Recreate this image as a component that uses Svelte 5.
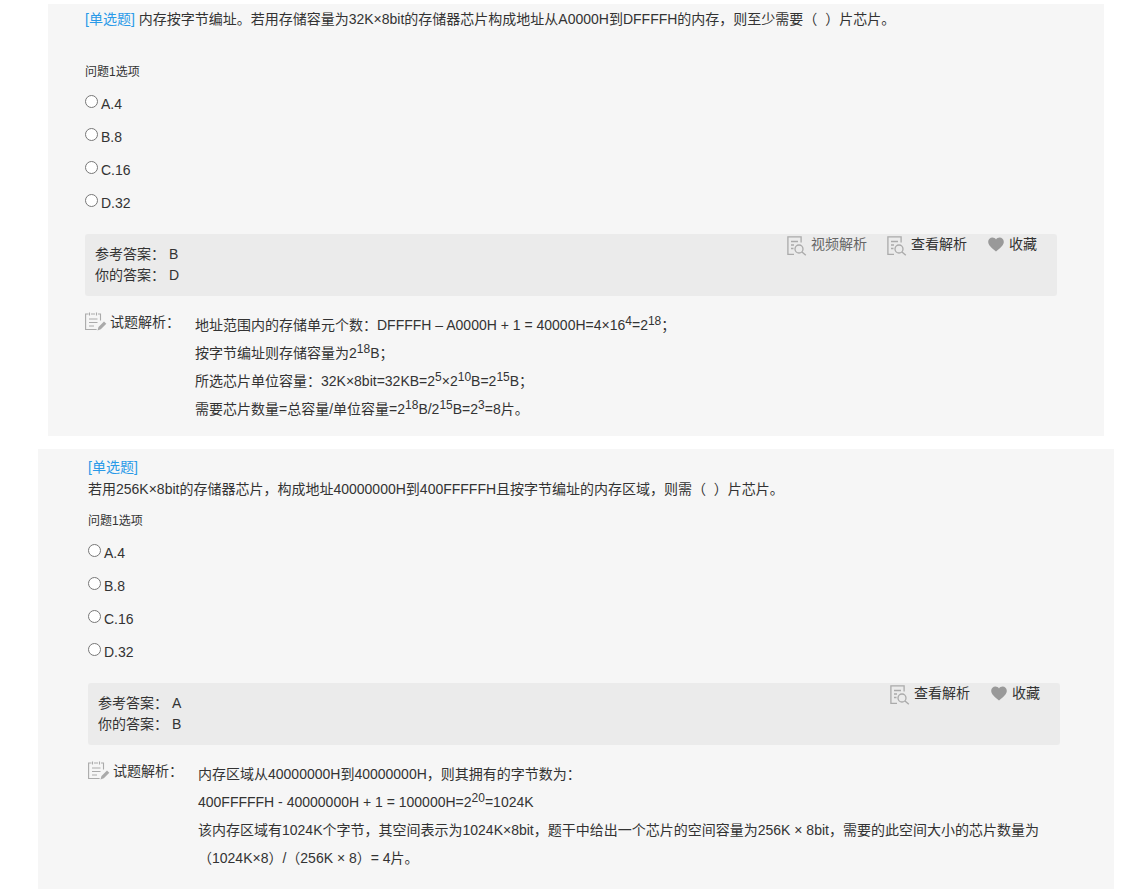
<script>
  const opts = ['A.4', 'B.8', 'C.16', 'D.32'];
</script>

{#snippet doc()}
  <svg class="ico doc" width="20" height="20" viewBox="0 0 20 20" fill="none" stroke="#aaa" stroke-width="1.300">
    <path d="M7 18.300H.9V.9h13.200v5.600" />
    <path d="M4 5.500h7M4 9h3M4 12.500h2.500" />
    <circle cx="12" cy="13" r="4" />
    <path d="M15 16l3.800 3.300" />
  </svg>
{/snippet}

{#snippet heart()}
  <svg class="ico" width="16" height="15" viewBox="0 0 16 15">
    <path fill="#999" d="M8 14.600C3 10.600.2 8 .2 4.800.2 2.300 2.200.6 4.400.6 5.900.6 7.200 1.300 8 2.500 8.800 1.300 10.100.6 11.600.6c2.200 0 4.200 1.700 4.200 4.200 0 3.200-2.800 5.800-7.800 9.800z" />
  </svg>
{/snippet}

{#snippet note()}
  <svg class="note" width="22" height="19" viewBox="0 0 22 19" fill="none" stroke="#aaa" stroke-width="1.100">
    <path d="M3.500 2H.6v15.500h11M15.500 8.500V2h-2.500M6 2h4" />
    <path d="M4.500.5v3M11.500.5v3" />
    <path d="M4 7h8.500M4 10.500h8.500M4 14h5" />
    <path fill="#aaa" stroke="none" d="M12.500 18.500l1-3.500 5.500-5.500 2.300 2.300-5.500 5.500z" />
  </svg>
{/snippet}

{#snippet options()}
  <p class="ask">问题1选项</p>
  <div class="opts">
    {#each opts as o}
      <label class="opt"><input type="radio" /><span>{o}</span></label>
    {/each}
  </div>
{/snippet}

<main class="page">
  <section class="card first">
    <p class="q"><span class="tag">[单选题]</span> 内存按字节编址。若用存储容量为32K×8bit的存储器芯片构成地址从A0000H到DFFFFH的内存，则至少需要（&nbsp; ）片芯片。</p>
    {@render options()}
    <div class="answer">
      <div class="tools">
        <span class="tool muted">{@render doc()}视频解析</span>
        <span class="tool">{@render doc()}查看解析</span>
        <span class="tool like">{@render heart()}收藏</span>
      </div>
      <div>参考答案： B</div>
      <div>你的答案： D</div>
    </div>
    <div class="exp">
      <div class="exp-h">{@render note()}<span>试题解析：</span></div>
      <div class="exp-b">
        <p>地址范围内的存储单元个数：DFFFFH – A0000H + 1 = 40000H=4×16<sup>4</sup>=2<sup>18</sup>；</p>
        <p>按字节编址则存储容量为2<sup>18</sup>B；</p>
        <p>所选芯片单位容量：32K×8bit=32KB=2<sup>5</sup>×2<sup>10</sup>B=2<sup>15</sup>B；</p>
        <p>需要芯片数量=总容量/单位容量=2<sup>18</sup>B/2<sup>15</sup>B=2<sup>3</sup>=8片。</p>
      </div>
    </div>
  </section>

  <section class="card second">
    <p class="q"><span class="tag">[单选题]</span><br />若用256K×8bit的存储器芯片，构成地址40000000H到400FFFFFH且按字节编址的内存区域，则需（&nbsp; ）片芯片。</p>
    {@render options()}
    <div class="answer">
      <div class="tools">
        <span class="tool">{@render doc()}查看解析</span>
        <span class="tool like">{@render heart()}收藏</span>
      </div>
      <div>参考答案： A</div>
      <div>你的答案： B</div>
    </div>
    <div class="exp">
      <div class="exp-h">{@render note()}<span>试题解析：</span></div>
      <div class="exp-b">
        <p>内存区域从40000000H到40000000H，则其拥有的字节数为：</p>
        <p>400FFFFFH - 40000000H + 1 = 100000H=2<sup>20</sup>=1024K</p>
        <p>该内存区域有1024K个字节，其空间表示为1024K×8bit，题干中给出一个芯片的空间容量为256K × 8bit，需要的此空间大小的芯片数量为</p>
        <p>（1024K×8）/（256K × 8）= 4片。</p>
      </div>
    </div>
  </section>
</main>

<style>
  :global(body) {
    margin: 0;
    background: #fff;
    color: #333;
    font-family: "Liberation Sans", "Noto Sans CJK SC", sans-serif;
    font-size: 14px;
  }
  .page {
    height: 893px;
    overflow: hidden;
    display: flex;
    flex-direction: column;
    padding-top: 4px;
    box-sizing: border-box;
    gap: 13px;
  }
  p { margin: 0; }
  .card { background: #f6f6f6; box-sizing: border-box; }
  .first { margin: 0 17px 0 48px; padding: 4px 47px 0 37px; height: 432px; }
  .second { margin: 0 7px 0 38px; padding: 7px 54px 0 50px; height: 440px; }
  .q { line-height: 22px; }
  .tag { color: #2a9ae8; }
  .first .ask { margin-top: 32px; }
  .second .ask { margin-top: 11px; }
  .ask { font-size: 12px; line-height: 20px; }
  .opts { display: flex; flex-direction: column; margin-top: 9px; }
  .opt { display: flex; height: 33px; align-items: flex-start; }
  .opt input { margin: 4px 3px 0 0; width: 13px; height: 13px; }
  .opt span { line-height: 20px; padding-top: 3px; }
  .answer {
    position: relative;
    margin-top: 11px;
    height: 62px;
    background: #ebebeb;
    border-radius: 3px;
    padding: 10px;
    box-sizing: border-box;
    line-height: 21px;
  }
  .tools {
    position: absolute;
    top: 0;
    right: 20px;
    display: flex;
    gap: 21px;
  }
  .tool { display: flex; align-items: center; height: 20px; gap: 4px; }
  .like { gap: 5px; }
  .muted { color: #666; margin-right: -1px; }
  .ico { flex: none; }
  .doc { margin-top: 3px; }
  .exp { display: flex; margin-top: 16px; }
  .exp-h { width: 110px; flex: none; display: flex; align-items: flex-start; gap: 3px; line-height: 20px; }
  .note { flex: none; }
  .exp-b { margin-top: -1px; }
  .exp-b p { line-height: 28px; }
  sup { font-size: 12px; line-height: 0; vertical-align: 5px; }
</style>
